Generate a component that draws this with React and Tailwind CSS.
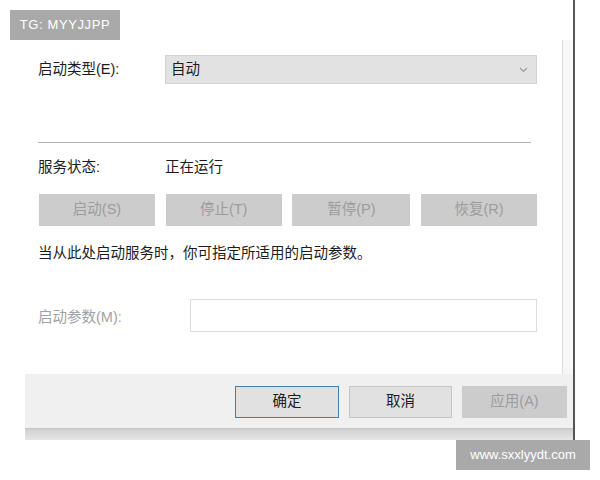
import React from 'react';

const font = { fontFamily: '"Liberation Sans", "Noto Sans CJK SC", sans-serif' };

function GreyButton( { label, className = '' } ) {
	return (
		<div
			className={ `flex h-[32px] items-center justify-center bg-[#cccccc] text-[14.5px] text-[#9c9c9c] ${ className }` }
		>
			{ label }
		</div>
	);
}

function Chevron() {
	return (
		<svg width="9" height="6" viewBox="0 0 9 6" className="text-[#9a9a9a]">
			<path d="M1 1l3.5 3.5L8 1" fill="none" stroke="currentColor" strokeWidth="1.2" />
		</svg>
	);
}

export default function App() {
	return (
		<div className="relative h-[480px] w-[600px] overflow-hidden bg-white text-[#1c1c1c]" style={ font }>
			<div className="ml-[25px] flex w-[550px] flex-col border-r-2 border-[#555555] pt-[40px]">
				<div className="flex h-[334px]">
					<div className="flex flex-1 flex-col pl-[13px] pr-[25px]">
						<div className="mt-[15px] flex h-[29px] items-center">
							<div className="w-[127px] text-[14.5px]">启动类型(E):</div>
							<div className="flex h-full flex-1 items-center justify-between border border-[#d2d2d2] bg-[#e2e2e2] pl-[5px] pr-[8px] text-[14.5px]">
								<span>自动</span>
								<Chevron />
							</div>
						</div>

						<div className="mr-[6px] mt-[58px] h-px bg-[#b4b4b4]" />

						<div className="mt-[15px] flex h-[20px] items-center text-[14.5px]">
							<div className="w-[127px]">服务状态:</div>
							<div>正在运行</div>
						</div>

						<div className="ml-px mt-[16px] flex w-[498px] justify-between">
							<GreyButton label="启动(S)" className="w-[116px]" />
							<GreyButton label="停止(T)" className="w-[116px]" />
							<GreyButton label="暂停(P)" className="w-[118px]" />
							<GreyButton label="恢复(R)" className="w-[116px]" />
						</div>

						<div className="mt-[17px] h-[20px] text-[14.5px] leading-[20px]">
							当从此处启动服务时，你可指定所适用的启动参数。
						</div>

						<div className="mt-[36px] flex h-[33px] items-center">
							<div className="w-[152px] pt-[5px] text-[14.5px] text-[#a2a2a2]">启动参数(M):</div>
							<div className="h-full flex-1 border border-[#dcdcdc] bg-white" />
						</div>
					</div>
					<div className="w-[11px] border-l border-[#dcdcdc] bg-[#f7f7f7]" />
				</div>

				<div className="flex h-[55px] justify-end gap-[10px] border-b border-[#c4c4c4] bg-[#f0f0f0] pr-[6px] pt-[12px]">
					<div className="flex h-[32px] w-[104px] items-center justify-center border border-[#3f7fb4] bg-[#e1e1e1] text-[14.5px]">
						确定
					</div>
					<div className="flex h-[32px] w-[103px] items-center justify-center border border-[#c6c6c6] bg-[#e1e1e1] text-[14.5px]">
						取消
					</div>
					<GreyButton label="应用(A)" className="w-[105px]" />
				</div>
				<div className="h-[11px] bg-gradient-to-b from-[#d0d0d0] to-[#e6e6e6]" />
			</div>

			<div className="absolute left-[10px] top-[10px] flex h-[30px] w-[110px] items-center justify-center bg-[#a9a9a9] text-[13px] tracking-[0.6px] text-white">
				TG: MYYJJPP
			</div>
			<div className="absolute left-[456px] top-[440px] flex h-[30px] w-[134px] items-center justify-center bg-[#a9a9a9] text-[13px] text-white">
				www.sxxlyydt.com
			</div>
		</div>
	);
}
